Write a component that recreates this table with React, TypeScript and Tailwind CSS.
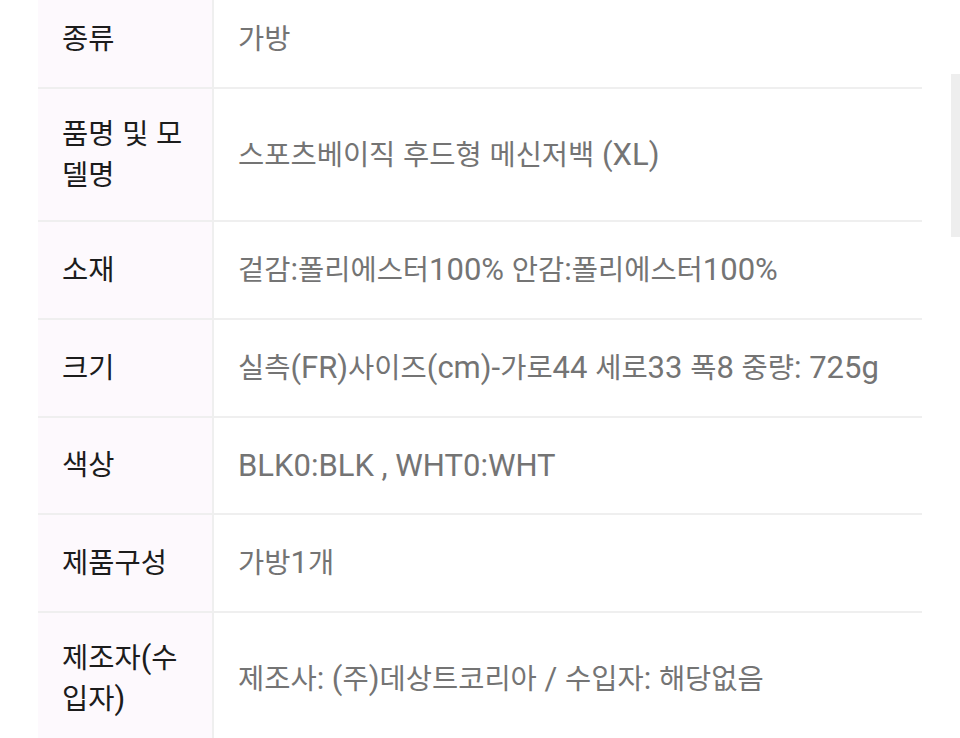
const rows: { label: string; value: string }[] = [
  { label: '종류', value: '가방' },
  { label: '품명 및 모델명', value: '스포츠베이직 후드형 메신저백 (XL)' },
  { label: '소재', value: '겉감:폴리에스터100% 안감:폴리에스터100%' },
  { label: '크기', value: '실측(FR)사이즈(cm)-가로44 세로33 폭8 중량: 725g' },
  { label: '색상', value: 'BLK0:BLK , WHT0:WHT' },
  { label: '제품구성', value: '가방1개' },
  { label: '제조자(수입자)', value: '제조사: (주)데상트코리아 / 수입자: 해당없음' },
];

// hangul runs render a bit smaller than latin, like the phone's fallback font
function Mixed({ text }: { text: string }) {
  const parts = text.split(/([\uAC00-\uD7A3]+)/);
  return (
    <>
      {parts.map((p, i) =>
        i % 2 === 1 ? (
          <span key={i} className="text-[28.5px]">
            {p}
          </span>
        ) : (
          <span key={i}>{p}</span>
        )
      )}
    </>
  );
}

export default function App() {
  return (
    <div
      className="relative h-[738px] overflow-hidden bg-white"
      style={{ fontFamily: 'Roboto, "Noto Sans CJK KR", "Noto Sans", sans-serif' }}
    >
      <div className="ml-[38px] mr-[38px] -mt-[9px]">
        {rows.map((r) => (
          <div key={r.label} className="grid grid-cols-[176px_1fr]">
            <div className="flex items-center border-r-2 border-b-2 border-[#efefef] bg-[#fdf9fd] px-6 py-[25px] text-[31px] leading-[39.5px] text-[#1c1c1c] break-all">
              <div>
                <Mixed text={r.label} />
              </div>
            </div>
            <div className="flex items-center border-b-2 border-[#efefef] px-6 py-[25px] text-[31px] leading-[45px] text-[#747474]">
              <div>
                <Mixed text={r.value} />
              </div>
            </div>
          </div>
        ))}
      </div>
      <div className="absolute right-0 top-[74px] h-[163px] w-[9px] bg-[#eeeeee]" />
    </div>
  );
}
